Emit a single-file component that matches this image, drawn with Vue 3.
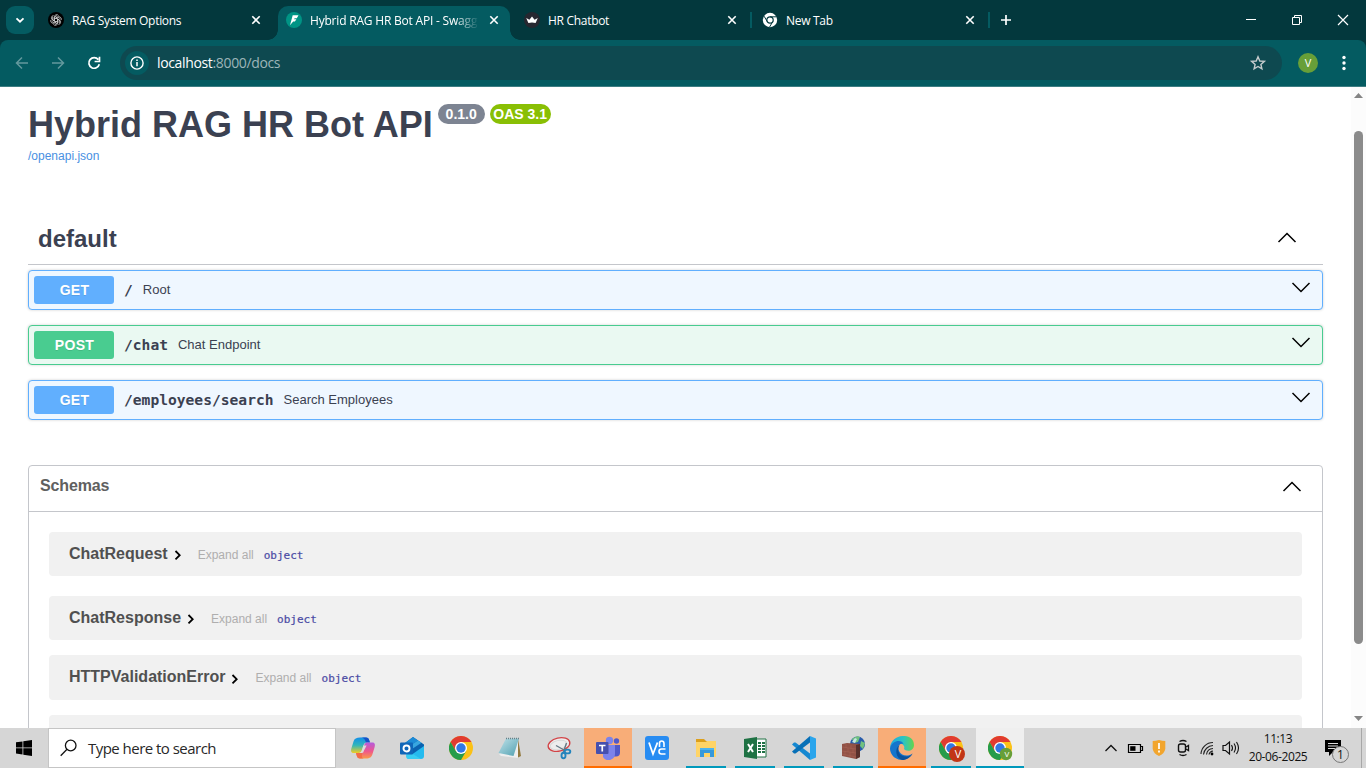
<script setup>
const tabs = [
  { id: 'gpt', title: 'RAG System Options', active: false, sep: false },
  { id: 'fast', title: 'Hybrid RAG HR Bot API - Swagger UI', active: true, sep: false },
  { id: 'crown', title: 'HR Chatbot', active: false, sep: true },
  { id: 'chrome', title: 'New Tab', active: false, sep: true }
]
const operations = [
  { method: 'GET', path: '/', summary: 'Root' },
  { method: 'POST', path: '/chat', summary: 'Chat Endpoint' },
  { method: 'GET', path: '/employees/search', summary: 'Search Employees' }
]
const schemas = [
  { name: 'ChatRequest', kind: 'request' },
  { name: 'ChatResponse', kind: 'response' },
  { name: 'HTTPValidationError', kind: 'error' }
]
</script>

<template>
  <div class="screen">
    <header class="tabstrip">
      <div class="tabsearch">
        <svg width="28" height="28" viewBox="0 0 28 28"><path d="M10.5 12.3l3.5 3.4 3.5-3.4" fill="none" stroke="#fff" stroke-width="1.8" /></svg>
      </div>
      <nav class="tabs">
        <div v-for="tab in tabs" :key="tab.id" class="tab" :class="{ active: tab.active, sep: tab.sep }">
          <svg class="fav" width="16" height="16" viewBox="0 0 16 16">
            <template v-if="tab.id === 'gpt'">
              <circle cx="8" cy="8" r="8" fill="#000" />
              <g fill="none" stroke="#d0d0d0" stroke-width=".75">
                <path v-for="n in 6" :key="n" :transform="`rotate(${n * 60} 8 8)`" d="M6.300 9V4.900a2.400 2.400 0 0 1 4.300-1.300M6.300 7l3.300-1.900 2.800 1.600" />
              </g>
            </template>
            <template v-else-if="tab.id === 'fast'">
              <circle cx="8" cy="8" r="8" fill="#009485" />
              <path d="M6.700 3.200h5.800L10.800 6.200H8.600l-.5 1h2.300L8.900 9.400H7.200L4 13.200z" fill="#fff" />
            </template>
            <template v-else-if="tab.id === 'crown'">
              <circle cx="8" cy="8" r="8" fill="#262730" />
              <path d="M2.200 6l3.200 1.800L8 4.500l2.600 3.300L13.800 6l-2.200 5Q8 10 4.400 11z" fill="#fff" />
            </template>
            <template v-else>
              <circle cx="8" cy="8" r="7.200" fill="#fff" />
              <circle cx="8" cy="8" r="3.200" fill="#fff" stroke="#03383d" stroke-width="1.200" />
              <path d="M8 4.800h6.500M5.300 9.600L2.100 4.200M10.700 9.600L7.600 15" stroke="#03383d" fill="none" />
            </template>
          </svg>
          <span class="tabtitle">{{ tab.title }}</span>
          <svg class="close" width="10" height="10" viewBox="0 0 10 10"><path d="M1.300 1.300l7.400 7.400M8.700 1.300L1.300 8.700" stroke="#fff" stroke-width="1.600" /></svg>
        </div>
      </nav>
      <svg class="plus" width="34" height="40" viewBox="0 0 34 40"><path d="M9 20h10M14 15v10" stroke="#fff" stroke-width="1.700" /></svg>
      <div class="winbtns">
        <svg width="46" height="40" viewBox="0 0 46 40"><path d="M18 19.500h10" stroke="#fff" /></svg>
        <svg width="46" height="40" viewBox="0 0 46 40"><path d="M18.500 17.500h7v7h-7zM20.500 17.500v-2h7v7h-2" fill="none" stroke="#fff" /></svg>
        <svg width="46" height="40" viewBox="0 0 46 40"><path d="M18 15l10 10M28 15L18 25" fill="none" stroke="#fff" stroke-width="1.200" /></svg>
      </div>
    </header>

    <div class="toolbar-wrap">
      <div class="toolbar">
        <svg class="nav" width="36" height="46" viewBox="0 0 36 46"><path d="M28 23H17M22 17.500L16.500 23l5.500 5.500" fill="none" stroke="#63999d" stroke-width="1.500" /></svg>
        <svg class="nav" width="36" height="46" viewBox="0 0 36 46"><path d="M16 23h11M22 17.500l5.500 5.500-5.500 5.500" fill="none" stroke="#63999d" stroke-width="1.500" /></svg>
        <svg class="nav" width="36" height="46" viewBox="0 0 36 46"><path d="M26.300 19.600a5.300 5.300 0 1 0 1 4.700M27.500 16.700v4.800h-4.900" fill="none" stroke="#fff" stroke-width="1.700" /></svg>
        <div class="omnibox">
          <span class="info"><svg width="24" height="24" viewBox="0 0 24 24"><circle cx="12" cy="12" r="6.100" fill="none" stroke="#fff" stroke-width="1.400" /><path d="M12 11v4.300M12 8.400v1.600" stroke="#fff" stroke-width="1.500" /></svg></span>
          <span class="url"><b>localhost</b>:8000/docs</span>
          <svg class="star" width="18" height="18" viewBox="0 0 18 18"><path d="M9 2.800l1.800 4.200 4.600.4-3.500 3 1 4.500L9 12.500l-3.900 2.400 1-4.500-3.500-3 4.600-.4z" fill="none" stroke="#c5cccd" stroke-width="1.400" /></svg>
        </div>
        <span class="avatar">V</span>
        <svg class="dots" width="12" height="20" viewBox="0 0 12 20"><g fill="#fff"><circle cx="6" cy="4.500" r="1.700" /><circle cx="6" cy="10" r="1.700" /><circle cx="6" cy="15.500" r="1.700" /></g></svg>
      </div>
    </div>

    <div class="viewport">
      <main class="page">
        <div class="heading">
          <h1>Hybrid RAG HR Bot API</h1>
          <span class="badge version">0.1.0</span>
          <span class="badge oas">OAS 3.1</span>
        </div>
        <a class="spec">/openapi.json</a>
        <div class="tag">
          <h2>default</h2>
          <svg width="20" height="12" viewBox="0 0 20 12"><path d="M1.500 10L10 1.500l8.500 8.500" fill="none" stroke="#000" stroke-width="1.500" /></svg>
        </div>
        <div v-for="op in operations" :key="op.path" class="op" :class="op.method.toLowerCase()">
          <span class="method">{{ op.method }}</span>
          <span class="path">{{ op.path }}</span>
          <span class="summary">{{ op.summary }}</span>
          <svg width="20" height="12" viewBox="0 0 20 12"><path d="M1.500 1L10 9.500l8.500-8.500" fill="none" stroke="#000" stroke-width="1.500" /></svg>
        </div>
        <section class="schemas">
          <div class="schemas-head">
            <h3>Schemas</h3>
            <svg width="20" height="12" viewBox="0 0 20 12"><path d="M1.500 10L10 1.500l8.500 8.500" fill="none" stroke="#000" stroke-width="1.500" /></svg>
          </div>
          <div v-for="s in schemas" :key="s.name" class="schema" :class="s.kind">
            <strong>{{ s.name }}</strong>
            <svg width="10" height="12" viewBox="0 0 10 12"><path d="M2.500 2L6.700 6.200 2.500 10.400" fill="none" stroke="#000" stroke-width="1.800" /></svg>
            <span class="expand">Expand all</span>
            <span class="type">object</span>
          </div>
          <div class="schema last"></div>
        </section>
      </main>
      <aside class="scrollbar">
        <svg width="15" height="18" viewBox="0 0 15 18"><path d="M3 11L7.500 6l4.500 5z" fill="#858585" /></svg>
        <i></i>
        <svg width="15" height="18" viewBox="0 0 15 18"><path d="M3 7l4.500 5L12 7z" fill="#858585" /></svg>
      </aside>
    </div>

    <footer class="taskbar">
      <div class="start"><svg width="16" height="16" viewBox="0 0 16 16"><path d="M0 2.300L6.500 1.400V7.500H0zM7.300 1.300L16 0v7.500H7.300zM0 8.300h6.500v6.200L0 13.600zM7.300 8.300H16V16l-8.700-1.300z" fill="#000" /></svg></div>
      <div class="search">
        <svg width="18" height="18" viewBox="0 0 18 18"><circle cx="10.700" cy="6.500" r="5.300" fill="none" stroke="#111" stroke-width="1.300" /><path d="M7 10.300L.7 16.700" stroke="#111" stroke-width="1.300" /></svg>
        <span>Type here to search</span>
      </div>
      <div class="apps">
        <div class="app">
          <svg width="26" height="24" viewBox="0 0 26 24">
            <defs>
              <linearGradient id="cpA" x1="0" y1="0" x2="0" y2="1"><stop offset="0" stop-color="#128fe8" /><stop offset=".5" stop-color="#31b6ba" /><stop offset="1" stop-color="#f2cd22" /></linearGradient>
              <linearGradient id="cpB" x1="0" y1="0" x2="0" y2="1"><stop offset="0" stop-color="#b45cdd" /><stop offset=".55" stop-color="#ef578c" /><stop offset="1" stop-color="#fa9a48" /></linearGradient>
            </defs>
            <path d="M10 1.500h6c2 0 2.800 1 3.300 3l.7 2h-3c-2 0-3 1-3.600 3L12 14c-.7 2.500-1.700 3-4 3H4c-3 0-3.400-2-2.500-5l2-6.500c.9-3 3-4 6.500-4z" fill="url(#cpA)" />
            <path d="M10 1.500h6c2 0 2.800 1 3.300 3l.7 2h-4c-1-3-2-5-6-5z" fill="#1751c7" />
            <path d="M16 22.500h-6c-2 0-2.800-1-3.300-3L6 17h3c2 0 3-1 3.600-3l1.500-4.500c.7-2.500 1.600-3 3.900-3h4c3 0 3.400 2 2.500 5l-2 6.500c-.9 3-2.500 4.500-6.500 4.500z" fill="url(#cpB)" />
            <path d="M6 17h3c2 0 3-1 3.600-3l-.6 5c-.4 2 .4 3.500 2 3.500h-4c-2 0-2.800-1-3.300-3z" fill="#f26c48" />
            <path d="M13.400 9.500h3.200L14 14.500q-.6 2.500-2 2.500H9q2 0 3-3z" fill="#dcdcdc" />
          </svg>
        </div>
        <div class="app">
          <svg width="26" height="24" viewBox="0 0 26 24"><path d="M4 8.500L14 1l11 7.500V15l-11 4-10-3z" fill="#0a62b0" /><path d="M4 8.500L14 1l5 3.400L9 11z" fill="#1c8bd6" /><path d="M9 11l10-6.600 3.500 2.400L13 13z" fill="#38a6e0" /><path d="M8 22l17-12v10q0 3-3 3H10q-2 0-2-1z" fill="#25bbef" /><path d="M8 14.500l14 8.500H10q-3 0-3-3z" fill="#38cdf3" /><rect x="1" y="6.500" width="13" height="12" rx="1" fill="#1066b8" /><circle cx="7.500" cy="12.500" r="3" fill="none" stroke="#fff" stroke-width="1.900" /></svg>
        </div>
        <div class="app">
          <svg width="24" height="24" viewBox="0 0 24 24">
            <defs><g id="chromeMark"><circle cx="12" cy="12" r="12" fill="#fbc116" /><path d="M1.600 6L6.800 15 12 6h10.400A12 12 0 0 0 1.600 6z" fill="#e13b30" /><path d="M1.600 6A12 12 0 0 0 12 24l5.200-9L12 17 6.800 15z" fill="#269c4b" /><circle cx="12" cy="12" r="6" fill="#fff" /><circle cx="12" cy="12" r="4.700" fill="#3278e4" /></g></defs>
            <use href="#chromeMark" />
          </svg>
        </div>
        <div class="app">
          <svg width="24" height="24" viewBox="0 0 24 24"><defs><linearGradient id="note" x1="0" y1="0" x2="1" y2="1"><stop offset="0" stop-color="#c0e2e9" /><stop offset="1" stop-color="#4f9fb0" /></linearGradient></defs><path d="M20 3l3 17-4 2z" fill="#92793f" /><path d="M20 3l0 19-17-2-2-2z" fill="#eee" /><path d="M8 2.500h13l-5.500 17.500L.5 17z" fill="url(#note)" /><path d="M8 2.500h13" stroke="#688087" stroke-width="1.500" stroke-dasharray="1 1" /></svg>
        </div>
        <div class="app">
          <svg width="26" height="24" viewBox="0 0 26 24"><ellipse cx="13" cy="8.500" rx="11" ry="6.600" transform="rotate(-13 13 8.500)" fill="#ededed" stroke="#d24346" stroke-width="1.400" /><ellipse cx="12.500" cy="9" rx="8.500" ry="4.500" transform="rotate(-13 12.500 9)" fill="none" stroke="#d8d8d8" /><path d="M10 9.500l9 5M20.500 7L17 17" stroke="#667985" stroke-width="1.400" /><g fill="none" stroke="#2384bd" stroke-width="1.900"><ellipse cx="21.500" cy="15.500" rx="2.800" ry="1.900" /><ellipse cx="17.500" cy="19.500" rx="2" ry="2.800" /></g></svg>
        </div>
        <div class="app orange">
          <svg width="26" height="24" viewBox="0 0 26 24"><circle cx="21.500" cy="5" r="2.700" fill="#5059c9" /><path d="M17 9h8v7.500q0 4-4 4h-4z" fill="#4f58c8" /><circle cx="14.500" cy="4.500" r="3.700" fill="#7b83eb" /><path d="M8 9h12v8a6.500 6.500 0 0 1-12 4z" fill="#7b83eb" /><rect x="1" y="6" width="12.500" height="12" rx="1" fill="#4650ae" /><path d="M4 9.500h6.500M7.250 9.500v6" stroke="#fff" stroke-width="1.700" /></svg>
        </div>
        <div class="app">
          <svg width="24" height="24" viewBox="0 0 24 24"><rect width="24" height="24" rx="3" fill="#278cf2" /><path d="M4 6.500l4 11.500 4.500-11.500" fill="none" stroke="#fff" stroke-width="1.800" /><path d="M14.500 11V7.500q0-2.500 2.200-2.500t2.300 2.500V11M20.500 13h-4q-2.500 0-2.500 2.500t2.500 2.500h4" fill="none" stroke="#fff" stroke-width="1.600" /></svg>
        </div>
        <div class="app run">
          <svg width="24" height="24" viewBox="0 0 24 24"><path d="M2 3h8l2 2h10v4H2z" fill="#dda01c" /><path d="M2 6h10l1-1h9v16H2z" fill="#ffd467" /><path d="M6 12h14v9h-4v-4h-6v4H6z" fill="#3699db" /><path d="M6 12h14v2H6z" fill="#4db4ee" /></svg>
        </div>
        <div class="app run">
          <svg width="24" height="24" viewBox="0 0 24 24"><path d="M13 3h10v18H13z" fill="#fff" stroke="#207245" /><path d="M15 6h3v2h-3zM19 6h3v2h-3zM15 9h3v2h-3zM19 9h3v2h-3zM15 12h3v2h-3zM19 12h3v2h-3zM15 15h3v2h-3zM19 15h3v2h-3z" fill="#207245" /><path d="M1 3l13-2v22L1 21z" fill="#1f7244" /><path d="M5 8l5 8M10 8l-5 8" stroke="#fff" stroke-width="2" /></svg>
        </div>
        <div class="app run">
          <svg width="24" height="24" viewBox="0 0 24 24"><path d="M0 8.500l2-2h1.500L18 17.500V24z" fill="#1688d1" /><path d="M18 0v6.500L3.500 17.500H2l-2-2z" fill="#0870b7" /><path d="M18 0l6 2.500v19L18 24z" fill="#2ba5ec" /></svg>
        </div>
        <div class="app run">
          <svg width="24" height="24" viewBox="0 0 24 24"><circle cx="16.500" cy="8" r="7.500" fill="#285cab" /><path d="M11 3q5-4 8-2l-2 5-4 1zM20 5l4 2-2 6-3-3z" fill="#71c17f" /><path d="M14 2l2 1-2 4-3-1z" fill="#c6e7e6" /><path d="M1 8l5-1 13 1v13l-4 2-14-3z" fill="#925246" /><path d="M15 9l4-1v13l-4 2z" fill="#58302c" /><path d="M1 11l14 2M1 15l14 2M1 18l14 3M5 8v4M10 9v4M7 12v4M12 13v4M4 15v4M9 16v5" stroke="#a86557" stroke-width=".5" fill="none" /></svg>
        </div>
        <div class="app orange">
          <svg width="24" height="24" viewBox="0 0 24 24"><defs><linearGradient id="edgeA"><stop offset="0" stop-color="#20a7df" /><stop offset=".55" stop-color="#2bc4c4" /><stop offset="1" stop-color="#65d54c" /></linearGradient></defs><path d="M0 12C1-3 24-4 24 9c0 5-5 7-9 5-2-1 0-2-1-4C11 5 3 5 0 12z" fill="url(#edgeA)" /><path d="M0 12C2 4 12 3 13.500 8 9 7 7 11 9 15c2.500 5 9 6 13.500 2.500C18 26 5 26 1 17c-.6-1.500-1-3-1-5z" fill="#1675cc" /><path d="M9.500 9C6 15 10 21 17 20.500c2.300 0 4-1.300 5.500-3-2 4-6 6.500-10.500 6.500-6-2-8-11-2.500-15z" fill="#0c529c" /></svg>
        </div>
        <div class="app run badgeapp"><svg width="26" height="26" viewBox="0 0 26 26"><use href="#chromeMark" /><circle cx="18" cy="18" r="8" fill="#c23616" /></svg><em>V</em></div>
        <div class="app run current badgeapp"><svg width="26" height="26" viewBox="0 0 26 26"><use href="#chromeMark" /><circle cx="18" cy="18" r="6.200" fill="#689f38" /></svg><em>V</em></div>
      </div>
      <div class="tray">
        <svg width="24" height="24" viewBox="0 0 24 24"><path d="M6.500 15l5.500-5.500 5.500 5.500" fill="none" stroke="#111" stroke-width="1.300" /></svg>
        <svg width="24" height="24" viewBox="0 0 24 24"><path d="M5.500 8.500h12v8h-12zM18 10.500h1.500v4H18" fill="none" stroke="#000" stroke-width="1.200" /><path d="M7.200 10.200h5.300v4.600H7.200z" /></svg>
        <svg width="24" height="24" viewBox="0 0 24 24"><path d="M5.700 5q3 0 6.300-1 3.300 1 6.300 1v8q-1 5-6.300 7-5.300-2-6.300-7z" fill="#f2a52d" /><path d="M12 7v6M12 14.500v2" stroke="#fff" stroke-width="1.700" /></svg>
        <svg width="24" height="24" viewBox="0 0 24 24"><rect x="7.500" y="8" width="7" height="8" rx="2" fill="none" stroke="#111" stroke-width="1.400" /><path d="M15 11l2.500-1.500v5L15 13M8.500 5.500q3.500-2 7 0M8.500 18.500q3.500 2 7 0" fill="none" stroke="#111" stroke-width="1.300" /></svg>
        <svg width="24" height="24" viewBox="0 0 24 24"><g fill="none" stroke="#222" stroke-width="1.100"><path d="M6 18A12 12 0 0 1 18 6.500M8.500 18.500A10 10 0 0 1 18 9.500M11.500 18.500A7 7 0 0 1 18 12.500M14 18.500A4.500 4.500 0 0 1 18 15" /></g><circle cx="17" cy="18" r="1.400" /></svg>
        <svg width="24" height="24" viewBox="0 0 24 24"><path d="M4 9.500h2.500L10.500 6v12l-4-3.500H4z" fill="none" stroke="#111" stroke-width="1.200" /><path d="M12.500 9q2 3 0 6M15 7.500q3 4.500 0 9M17.500 6q4 6 0 12" fill="none" stroke="#111" stroke-width="1.100" /></svg>
        <div class="clock"><span class="time">11:13</span><span class="date">20-06-2025</span></div>
        <div class="notify">
          <svg width="17" height="16" viewBox="0 0 17 16"><path d="M0 0h16v12H8l-4 4v-4H0z" /><path d="M3 3.500h10M3 6h10M3 8.500h7" stroke="#ddd" /></svg>
          <span class="count">1</span>
        </div>
        <i class="peek"></i>
      </div>
    </footer>
  </div>
</template>

<style>
html, body { margin: 0; overflow: hidden; }
</style>

<style scoped>
* { box-sizing: border-box; }
svg { display: block; flex: none; }
.screen { width: 1366px; height: 768px; display: flex; flex-direction: column; overflow: hidden; background: #fff; font-family: "Liberation Sans", Arial, sans-serif; }
.tabstrip { height: 40px; flex: none; background: #03383d; display: flex; align-items: center; }
.tabsearch { width: 28px; height: 28px; margin: 0 6px; border-radius: 9px; background: #045b61; }
.tabs { display: flex; height: 40px; }
.tab { width: 238px; height: 40px; padding-left: 8px; display: flex; align-items: center; position: relative; }
.tab.active::before { content: ""; position: absolute; left: 0; top: 6px; width: 232px; height: 34px; background: #045b61; border-radius: 10px 10px 0 0; }
.tab.active::after { content: ""; position: absolute; left: -10px; bottom: 0; width: 252px; height: 10px; background: radial-gradient(circle at 0 0, transparent 9.500px, #045b61 10px) left / 10px 10px no-repeat, radial-gradient(circle at 100% 0, transparent 9.500px, #045b61 10px) right / 10px 10px no-repeat; }
.tab.sep::after { content: ""; position: absolute; right: 2px; top: 12px; width: 2px; height: 16px; background: #045b61; }
.fav, .tabtitle, .close { position: relative; }
.tabtitle { width: 168px; margin: 2px 0 0 8px; overflow: hidden; white-space: nowrap; font: 12px/20px "Open Sans", sans-serif; color: #fff; letter-spacing: -.3px; }
.tab.active .tabtitle { letter-spacing: -.2px; mask-image: linear-gradient(to right, #000 145px, transparent 169px); }
.close { margin-left: 11px; }
.winbtns { margin-left: auto; display: flex; }
.toolbar-wrap { flex: none; background: #03383d; height: 47px; }
.toolbar { height: 47px; display: flex; align-items: center; padding-bottom: 1px; background: #045b61; border-radius: 8px 8px 0 0; border-bottom: 1px solid #3d7d82; }
.omnibox { width: 1162px; height: 34px; margin-left: 12px; border-radius: 17px; background: #0e4950; display: flex; align-items: center; padding: 0 15px 0 5px; }
.info { width: 24px; height: 24px; border-radius: 50%; background: #045b61; }
.url { margin-left: 8px; font: 14px/20px "Open Sans", sans-serif; color: #9db5b8; letter-spacing: -.35px; }
.url b { font-weight: 400; color: #fff; }
.star { margin-left: auto; }
.avatar { width: 20px; height: 20px; margin-left: 16px; border-radius: 50%; background: #689f38; color: #fff; font: 11px/20px "Open Sans", sans-serif; text-align: center; }
.dots { margin-left: 20px; }
.viewport { height: 641px; flex: none; display: flex; overflow: hidden; }
.page { width: 1351px; padding: 17px 28px 0; color: #3b4151; }
.heading { display: flex; align-items: flex-start; height: 44px; }
h1 { margin: 0 5px 0 0; font-size: 36px; line-height: 41px; font-weight: 700; white-space: nowrap; }
.badge { height: 20px; border-radius: 10px; color: #fff; font-size: 14px; font-weight: 700; line-height: 20px; text-align: center; }
.version { width: 47px; background: #7d8492; }
.oas { width: 61px; margin-left: 5px; background: #89bf04; }
.spec { display: block; height: 14px; font-size: 12px; line-height: 14px; color: #4990e2; margin-top: 1px; }
.tag { height: 53px; margin-top: 49px; padding: 0 26px 0 10px; display: flex; justify-content: space-between; border-bottom: 1px solid #c4c6cb; }
.tag h2 { margin: 0; font-size: 24px; line-height: 53px; }
.tag svg { margin-top: 20px; }
.op { height: 40px; margin: 0 0 15px; padding: 5px 11px 5px 5px; display: flex; align-items: center; border: 1px solid #61affe; border-radius: 4px; background: #eff7ff; box-shadow: 0 0 3px rgba(0,0,0,.19); }
.tag + .op { margin-top: 5px; }
.op.post { border-color: #49cc90; background: #eaf9f2; }
.method { width: 80px; height: 28px; padding-left: 1px; border-radius: 3px; background: #61affe; color: #fff; font-size: 14px; line-height: 28px; font-weight: 700; text-align: center; letter-spacing: .3px; text-shadow: 0 1px 0 rgba(0,0,0,.1); }
.post .method { background: #49cc90; }
.path { margin: 0 0 0 10px; font: bold 14.620px/20px "DejaVu Sans Mono", monospace; }
.summary { margin-left: 10px; font-size: 13px; line-height: 20px; margin-top: -1px; }
.op svg { margin-left: auto; margin-top: -5px; }
.schemas { height: 300px; margin-top: 45px; border: 1px solid #c4c6cb; border-radius: 4px; }
.schemas-head { height: 46px; padding: 0 20px 0 11px; display: flex; justify-content: space-between; border-bottom: 1px solid #c4c6cb; }
h3 { margin: 0; font-size: 16px; line-height: 40px; color: #606060; letter-spacing: -.15px; }
.schemas-head svg { margin-top: 15px; }
.schema { height: 44px; margin: 20px 20px 0; padding: 0 20px; display: flex; align-items: center; background: #f1f1f1; border-radius: 4px; }
.schema.error { height: 45px; margin-top: 15px; }
.schema.last { margin-top: 15px; }
.schema strong { font-size: 16px; line-height: 20px; color: #505050; }
.schema.error strong { margin-top: -1px; }
.schema svg { margin-left: 5px; margin-top: 1px; }
.schema.error svg { margin-top: 2px; }
.expand { margin-left: 15px; font-size: 12px; color: #afaeae; margin-top: 1px; }
.type { margin-left: 10px; font: 11px/16px "DejaVu Sans Mono", monospace; color: #4a4aa4; margin-top: 3px; -webkit-text-stroke: .2px #4a4aa4; }
.scrollbar { width: 15px; background: #fcfcfc; display: flex; flex-direction: column; align-items: center; }
.scrollbar i { width: 9px; height: 513px; border-radius: 5px; margin: 26px 0 65px; background: #8b8b8b; }
.taskbar { height: 40px; flex: none; display: flex; background: #d6d6d6; }
.start { width: 48px; display: flex; align-items: center; justify-content: center; }
.search { width: 288px; border: 1px solid #c5c5c5; background: #fff; display: flex; align-items: center; padding-left: 11px; font: 15px/20px "Open Sans", sans-serif; color: #282828; }
.search span { margin-left: 10px; letter-spacing: -.53px; }
.apps { display: flex; gap: 1px; margin-left: 3px; }
.app { width: 48px; height: 40px; display: flex; align-items: center; justify-content: center; position: relative; }
.app.run::after { content: ""; position: absolute; bottom: 0; left: 4px; right: 4px; height: 2px; background: #0099bc; }
.app.current { background: #efefef; }
.app.current::after { left: 0; right: 0; }
.app.orange { background: #f8ad78; border-bottom: 2px solid #ff6c00; padding-top: 2px; }
.badgeapp svg { margin: 2px 0 0 2px; }
.badgeapp em { position: absolute; left: 26px; top: 19px; width: 10px; text-align: center; color: #fff; font: normal 11px/14px "Open Sans", sans-serif; }
.current em { font-size: 8px; }
.tray { margin-left: auto; display: flex; align-items: center; }
.clock { width: 70px; display: flex; flex-direction: column; align-items: center; font: 12px/18px "Open Sans", sans-serif; color: #111; letter-spacing: -.4px; white-space: nowrap; }
.notify { width: 48px; height: 40px; padding: 12px 0 0 12px; position: relative; }
.count { position: absolute; left: 19px; top: 18px; width: 17px; height: 17px; border: 1px solid #777; border-radius: 50%; background: #d6d6d6; color: #111; font: 12px/15px "Open Sans", sans-serif; text-align: center; }
.peek { width: 5px; height: 40px; border-left: 1px solid #a8a8a8; }
</style>
